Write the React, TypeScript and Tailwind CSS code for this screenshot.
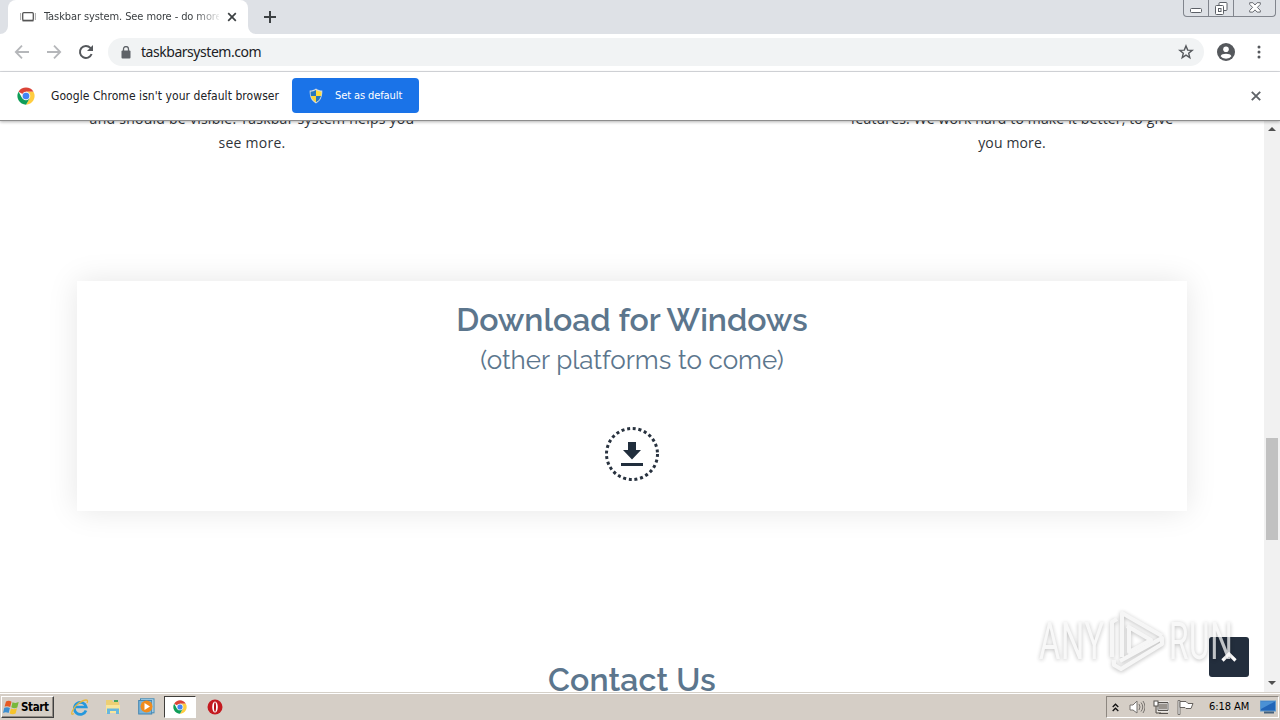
import React from "react";

const UI = "font-['DejaVu_Sans_Condensed','DejaVu_Sans',sans-serif]";

function ChromeLogo({ size }: { size: number }) {
  return (
    <svg width={size} height={size} viewBox="0 0 48 48" className="shrink-0">
      <circle cx="24" cy="24" r="23" fill="#fff" />
      <path d="M24 24 4.1 12.5A23 23 0 0 1 43.9 12.5H24z" fill="#db4437" />
      <path d="M43.9 12.5A23 23 0 0 1 24 47L34 29.8 24 12.5z" fill="#ffcd40" />
      <path d="M4.1 12.5A23 23 0 0 0 24 47l10-17.2H14z" fill="#0f9d58" />
      <circle cx="24" cy="24" r="11.5" fill="#f1f1f1" />
      <circle cx="24" cy="24" r="8.8" fill="#4285f4" />
    </svg>
  );
}

function TabStrip() {
  return (
    <div className="flex h-[34px] shrink-0 items-start bg-[#dee1e6]">
      <div className="flex w-2 self-stretch items-end">
        <svg width="8" height="8"><path d="M8 0V8H0A8 8 0 0 0 8 0z" fill="#fff" /></svg>
      </div>
      <div className="flex h-[34px] w-[240px] items-center rounded-t-lg bg-white pl-[12px]">
        <svg width="16" height="12" viewBox="0 0 16 12" fill="none" className="shrink-0">
          <rect x="2.7" y="1.7" width="10.6" height="7.6" rx="1" stroke="#555" strokeWidth="1.3" />
          <path d="M2.5 9.7h11" stroke="#555" strokeWidth="1.5" />
          <path d="M.6 2v7M15.4 2v7" stroke="#aaa" />
        </svg>
        <div className={`ml-2 w-[175px] overflow-hidden whitespace-nowrap text-[11px] leading-4 tracking-[-0.1px] text-[#3c4043] [mask-image:linear-gradient(to_right,#000_150px,transparent_178px)] ${UI}`}>
          Taskbar system. See more - do more
        </div>
        <svg width="10" height="10" className="ml-2 shrink-0" stroke="#3c4043" strokeWidth="1.7"><path d="M1.2 1.2l7.6 7.6M8.8 1.2L1.2 8.8" /></svg>
      </div>
      <div className="flex w-2 self-stretch items-end">
        <svg width="8" height="8"><path d="M0 0V8H8A8 8 0 0 1 0 0z" fill="#fff" /></svg>
      </div>
      <svg width="12" height="12" className="ml-2 mt-[11px]" stroke="#3c4043" strokeWidth="2"><path d="M6 0v12M0 6h12" /></svg>
      <div className="ml-auto mr-1 flex h-[17px] w-[93px] rounded-b border border-t-0 border-[#81858d]">
        <div className="flex w-[25px] items-end justify-center border-r border-[#81858d] pb-[3px]">
          <svg width="12" height="5"><rect x=".5" y=".5" width="11" height="4" rx="1" fill="#fff" stroke="#5c6067" /></svg>
        </div>
        <div className="flex w-[25px] items-end justify-center border-r border-[#81858d] pb-px">
          <svg width="13" height="13" fill="#fff" stroke="#5c6067"><rect x="4" y=".5" width="8" height="8" rx="1" /><rect x=".5" y="3.5" width="8" height="9" rx="1" /><rect x="3.5" y="6.5" width="2.5" height="3" /></svg>
        </div>
        <div className="flex flex-1 items-end justify-center pb-[3px]">
          <svg width="12" height="11" fill="#fff" stroke="#5c6067" strokeWidth=".9"><path d="M.7.7h3.2L6 3 8.1.7h3.2v1.7L8.4 5.4l2.9 3v1.7H8.1L6 7.9l-2.1 2.2H.7V8.4l2.9-3L.7 2.4z" /></svg>
        </div>
      </div>
    </div>
  );
}

function Toolbar() {
  return (
    <div className="flex h-[38px] shrink-0 items-center border-b border-[#dadce0] bg-white pb-px pl-[14px]">
      <svg width="16" height="16" fill="none" stroke="#b5b7ba" strokeWidth="1.8"><path d="M15 8H2M8 1.7L1.8 8 8 14.3" /></svg>
      <svg width="16" height="16" className="ml-4" fill="none" stroke="#b5b7ba" strokeWidth="1.8"><path d="M1 8h13M8 1.7L14.2 8 8 14.3" /></svg>
      <svg width="16" height="16" className="ml-4" fill="none" stroke="#55585c" strokeWidth="2"><path d="M13.6 10A6 6 0 1 1 12.4 3.9L14 5.6" /><path d="M15 1v6H9z" fill="#55585c" stroke="none" /></svg>
      <div className="ml-[14px] flex h-7 w-[1096px] items-center rounded-full bg-[#f1f3f4] pl-[13px] pr-[10px]">
        <svg width="10" height="13" className="shrink-0"><rect x=".5" y="4.5" width="9" height="8" rx="1" fill="#5f6368" /><path d="M2.5 5V3a2.5 2.5 0 0 1 5 0v2" fill="none" stroke="#5f6368" strokeWidth="1.3" /></svg>
        <div className="ml-[10px] font-['Noto_Sans',sans-serif] text-[14px] leading-5 tracking-[-0.46px] text-[#202124]">taskbarsystem.com</div>
        <svg width="16" height="16" viewBox="0 0 16 16" className="ml-auto" fill="none" stroke="#55585c" strokeWidth="1.4"><path d="M8 1.9l1.7 4.2 4.5.3-3.5 2.9 1.1 4.3L8 11.2l-3.8 2.4 1.1-4.3-3.5-2.9 4.5-.3z" /></svg>
      </div>
      <svg width="18" height="18" className="ml-[13px]"><circle cx="9" cy="9" r="9" fill="#55585c" /><circle cx="9" cy="6.3" r="2.8" fill="#fff" /><path d="M3.6 13.2c.9-3.2 9.9-3.2 10.8 0A6.8 6.8 0 0 1 3.6 13.2z" fill="#fff" /></svg>
      <svg width="4" height="14" className="ml-[22px]" fill="#55585c"><circle cx="2" cy="2" r="1.5" /><circle cx="2" cy="7" r="1.5" /><circle cx="2" cy="12" r="1.5" /></svg>
    </div>
  );
}

function InfoBar() {
  return (
    <div className="relative z-10 flex h-[49px] shrink-0 items-center border-b border-[#8d8d8d] bg-white pb-px pl-[17px] shadow-[0_1px_3px_rgba(0,0,0,0.3)]">
      <ChromeLogo size={18} />
      <div className={`ml-4 w-[229px] whitespace-nowrap text-[12px] leading-4 tracking-[0.06px] text-[#202124] ${UI}`}>Google Chrome isn't your default browser</div>
      <button className="ml-3 flex h-[35px] w-[127px] items-center rounded bg-[#1a73e8] pl-4 text-white">
        <svg width="16" height="16" viewBox="0 0 16 16" className="shrink-0">
          <path d="M8 .5c2 1.500 4 2 6.300 2.100C14.500 8 13 13 8 15.500 3 13 1.500 8 1.700 2.600 4 2.500 6 2 8 .5z" fill="#d4dbe0" />
          <path d="M8 2v6H2.900Q2.500 6 2.600 3.700 5.500 3.500 8 2z" fill="#2677bf" />
          <path d="M8 2v6h5.100q.4-2 .3-4.300Q10.500 3.500 8 2z" fill="#ffdc3c" />
          <path d="M8 8v6.300Q4 12 2.900 8z" fill="#f9d63c" />
          <path d="M8 8v6.300Q12 12 13.100 8z" fill="#2677bf" />
        </svg>
        <span className={`ml-[11px] whitespace-nowrap text-[11px] leading-4 tracking-[-0.1px] ${UI}`}>Set as default</span>
      </button>
      <svg width="10" height="10" className="ml-auto mr-[19px]" stroke="#5f6368" strokeWidth="1.9"><path d="M.8.8l8.400 8.400M9.200.8L.8 9.200" /></svg>
    </div>
  );
}

function Watermark() {
  return (
    <div className="absolute left-[1039px] top-[488px] flex h-[64px] w-[200px] items-center opacity-75 drop-shadow-[0_1px_2px_rgba(0,0,0,0.34)]">
      <span className="w-[68px] origin-left scale-x-[0.64] whitespace-nowrap font-['Roboto',sans-serif] text-[51px] leading-none tracking-[1px] text-[#f6f6f6]">ANY</span>
      <svg width="60" height="64" viewBox="0 0 60 64" className="shrink-0" fill="none" stroke="#f4f4f4" strokeWidth="4" strokeLinejoin="round">
        <path d="M15 48V4L55 27" /><path d="M22 17V43L44 31L20 17" /><path d="M13 52L55 29V35L14 60L7 56V51" /><path d="M10 10L5 13V48" />
      </svg>
      <span className="ml-[2px] w-[66px] origin-left scale-x-[0.62] whitespace-nowrap font-['Roboto',sans-serif] text-[51px] leading-none tracking-[1px] text-[#f6f6f6]">RUN</span>
    </div>
  );
}

function Page() {
  return (
    <div className="relative flex min-h-0 flex-1 overflow-hidden bg-white">
      <main className="flex w-[1264px] flex-col items-center">
        <div className="-mt-[14px] grid w-[1140px] shrink-0 grid-cols-3 text-center font-['Open_Sans',sans-serif] text-[14px] leading-6 text-[#2f3439]">
          <p className="tracking-[0.260px]">and should be visible. Taskbar system helps you<br />see more.</p>
          <div />
          <p className="tracking-[0.150px]">features. We work hard to make it better, to give<br />you more.</p>
        </div>
        <section className="mt-[126px] flex h-[230px] w-[1110px] shrink-0 flex-col items-center bg-white pt-[19px] text-[#5c768d] shadow-[0_0_29px_rgba(0,0,0,0.1)]">
          <h2 className="font-['Raleway','Lato',sans-serif] text-[32px] font-semibold leading-[40px] tracking-[-0.050px]">Download for Windows</h2>
          <p className="font-['Raleway','Lato',sans-serif] text-[26px] leading-[40px]">(other platforms to come)</p>
          <svg width="56" height="56" viewBox="0 0 56 56" className="mt-[46px]">
            <circle cx="28" cy="28" r="25.5" fill="none" stroke="#28323f" strokeWidth="3" strokeDasharray="3 2.722" />
            <path d="M24 16h8v8h5l-9 9.500-9-9.500h5zM17 37h22v3H17z" fill="#212e3d" />
          </svg>
        </section>
        <h2 className="mt-[149px] shrink-0 font-['Raleway','Lato',sans-serif] text-[32px] font-semibold leading-[40px] tracking-[0.100px] text-[#5c768d]">Contact Us</h2>
      </main>
      <div className="flex w-4 flex-col items-center bg-[#f1f1f1] pt-[6px]">
        <svg width="8" height="4"><path d="M0 4L4 0l4 4z" fill="#505050" /></svg>
        <div className="mt-[307px] h-[102px] w-3 bg-[#c1c1c1]" />
        <svg width="8" height="4" className="mb-[7px] mt-auto"><path d="M0 0l4 4 4-4z" fill="#505050" /></svg>
      </div>
      <button className="absolute left-[1209px] top-[516px] flex h-10 w-10 items-center justify-center rounded-[3px] bg-[#232e3d]">
        <svg width="16" height="12" fill="none" stroke="#fff" strokeWidth="3.200"><path d="M1.500 9.500L8 3l6.500 6.500" /></svg>
      </button>
      <Watermark />
    </div>
  );
}

function Taskbar() {
  return (
    <div className="flex h-7 shrink-0 items-center border-t border-[#d5d0c8] bg-[#d5cec6] pl-px shadow-[inset_0_1px_0_#fff]">
      <div className="mt-[1px] flex h-[22px] w-[53px] items-center border border-b-[#404040] border-l-white border-r-[#404040] border-t-white bg-[#d5cec6] pl-px shadow-[inset_-1px_-1px_0_#918b84]">
        <svg width="17" height="17" viewBox="0 0 17 17" className="shrink-0">
          <path d="M3 2.500q3-1.500 5.500.3L7.200 8Q4.500 6.500 1.600 7.600z" fill="#e65a24" />
          <path d="M9.500 3.200q3 1.500 6.200-.1L14.300 8.500q-3 1.400-6-.2z" fill="#78b83a" />
          <path d="M1.300 8.800q3-1.300 5.600.2L5.600 14Q3 12.700 0 13.900z" fill="#3c8ed0" />
          <path d="M8 9.400q3 1.500 6-.1l-1.400 5.300q-3 1.500-6-.1z" fill="#f6c42c" />
        </svg>
        <span className="ml-px font-['DejaVu_Sans_Condensed','DejaVu_Sans',sans-serif] text-[11.500px] font-bold leading-4 tracking-[-0.350px] text-black">Start</span>
      </div>
      <div className="ml-[17px] flex h-6 items-center">
        <svg width="18" height="18" viewBox="0 0 18 18" fill="none"><path d="M15 12.500A6 6 0 1 1 15.200 9H5" stroke="#2698dc" strokeWidth="2.700" /><path d="M3 15.500C-2 19 2 9 8 5s10-4 8 0" stroke="#e8b83c" strokeWidth="1.300" /></svg>
        <svg width="16" height="16" viewBox="0 0 16 16" className="ml-4"><path d="M1 1h6l1 2h6v11H1z" fill="#edcf73" /><path d="M1 6h14v8H1z" fill="#f8e59b" /><path d="M2 15V9.500h12V15h-3v-3H5v3z" fill="#68b7de" /><path d="M9 2h4" stroke="#42a55c" strokeWidth="2" /></svg>
        <svg width="17" height="17" viewBox="0 0 17 17" className="ml-[17px]"><rect x="2.500" y=".8" width="13.500" height="14" fill="#b9dcef" stroke="#438bb5" /><rect x=".7" y="2.500" width="13" height="13.500" fill="#78b4db" stroke="#4585b0" /><circle cx="8.500" cy="8.500" r="6" fill="#ef8b1d" /><path d="M6.500 5v7l5.500-3.500z" fill="#fff" /></svg>
        <div className="ml-[9px] flex h-[22px] w-[32px] items-center justify-center border border-b-white border-l-[#403e3b] border-r-white border-t-[#403e3b] bg-white"><ChromeLogo size={14} /></div>
        <svg width="16" height="16" viewBox="0 0 16 16" className="ml-[11px]"><circle cx="8" cy="8" r="7.500" fill="#c41a20" /><ellipse cx="8" cy="8" rx="2.800" ry="5.600" fill="#fff" /><ellipse cx="8" cy="8" rx="1" ry="4.700" fill="#b60d12" /></svg>
      </div>
      <div className="ml-auto mr-px mt-[1px] flex h-[22px] w-[173px] items-center border border-b-white border-l-[#8d8780] border-r-white border-t-[#8d8780] pl-[5px]">
        <svg width="7" height="9" fill="none" stroke="#111" strokeWidth="1.300"><path d="M.7 4l2.800-2.800L6.300 4M.7 8l2.800-2.800L6.300 8" /></svg>
        <svg width="16" height="14" viewBox="0 0 16 14" className="ml-[10px]"><path d="M1 5h3l4-4v12L4 10H1z" fill="#fff" stroke="#77736f" /><path d="M10 4q2 3 0 6M12 2.500q3.500 4.500 0 9M14 1q4 6 0 12" fill="none" stroke="#77736f" /></svg>
        <svg width="16" height="15" viewBox="0 0 16 15" className="ml-[8px]"><path d="M5 2.500h10v8H5z" fill="#99948e" stroke="#fff" strokeWidth="2" /><path d="M5 2.500h10v8H5zM6 13.500h9" fill="none" stroke="#55514d" /><rect x="1" y="1" width="4" height="5" fill="#fff" stroke="#55514d" /><path d="M3 6v7h5" fill="none" stroke="#55514d" /></svg>
        <svg width="17" height="15" viewBox="0 0 17 15" className="ml-[8px]"><path d="M1 .5h2v14H1z" fill="#fff" stroke="#77736f" /><path d="M3 1.500h6l2 2h5l-2 5H9l-1-1H3z" fill="#fff" stroke="#66625e" /></svg>
        <span className={`ml-[15px] w-[42px] whitespace-nowrap text-[11px] leading-4 tracking-[-0.050px] text-black ${UI}`}>6:18 AM</span>
        <svg width="16" height="14" viewBox="0 0 16 14" className="ml-[9px] shrink-0"><rect x=".5" y="1" width="15" height="10" fill="#2165b8" stroke="#5e99cd" /><path d="M1 1.500h14L1 9z" fill="#4a91d5" /><path d="M4 12.500h10" stroke="#44617d" strokeWidth="2" /></svg>
      </div>
    </div>
  );
}

export default function App() {
  return (
    <div className="flex h-[720px] w-[1280px] flex-col overflow-hidden bg-white">
      <TabStrip />
      <Toolbar />
      <InfoBar />
      <Page />
      <Taskbar />
    </div>
  );
}
